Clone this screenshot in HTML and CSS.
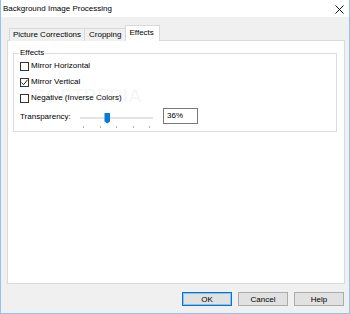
FILE: index.html
```html
<!DOCTYPE html>
<html lang="en">
<head>
  <meta charset="UTF-8" />
  <title>Background Image Processing</title>
  <link rel="stylesheet" href="styles.css">
</head>
<body>
  <div class="window">
    <!-- Title bar -->
    <div class="titlebar">
      <span class="title">Background Image Processing</span>
      <svg class="close" width="9" height="9" viewBox="0 0 9 9">
        <path d="M0.5 0.5 L8.5 8.5 M8.5 0.5 L0.5 8.5" stroke="#111" stroke-width="1" fill="none" />
      </svg>
    </div>

    <div class="client">
      <!-- Tabs -->
      <div class="tabs">
        <div class="tab">Picture Corrections</div>
        <div class="tab">Cropping</div>
        <div class="tab active">Effects</div>
      </div>

      <!-- Tab page -->
      <div class="panel">
        <fieldset class="group">
          <legend>Effects</legend>
          <div class="check-row"><span class="box"></span>Mirror Horizontal</div>
          <div class="check-row">
            <span class="box">
              <svg width="7" height="7" viewBox="0 0 7 7"><path d="M0.5 3.5 L2.5 5.8 L6.5 0.8" stroke="#222" stroke-width="1" fill="none" /></svg>
            </span>Mirror Vertical
          </div>
          <div class="check-row"><span class="box"></span>Negative (Inverse Colors)</div>
          <div class="slider-row">
            <span class="slider-label">Transparency:</span>
            <svg class="slider" width="76" height="20" viewBox="0 0 76 20">
              <rect x="0" y="8" width="73" height="2" fill="#e3e3e3" />
              <g fill="#b0b0b0">
                <rect x="3" y="17" width="1" height="2" />
                <rect x="20" y="17" width="1" height="2" />
                <rect x="36" y="17" width="1" height="2" />
                <rect x="53" y="17" width="1" height="2" />
                <rect x="69" y="17" width="1" height="2" />
              </g>
              <path d="M24.5 4 H30 V12.5 L27.25 14.5 L24.5 12.5 Z" fill="#0a78d6" />
            </svg>
            <div class="value-box">36%</div>
          </div>
        </fieldset>
        <div class="watermark">SOFTPEDIA<sup>®</sup></div>
      </div>

      <!-- Buttons -->
      <div class="buttons">
        <button class="btn default">OK</button>
        <button class="btn">Cancel</button>
        <button class="btn">Help</button>
      </div>
    </div>
  </div>
</body>
</html>
```

FILE: styles.css
```css
* { box-sizing: border-box; margin: 0; padding: 0; }
html, body { width: 350px; height: 314px; overflow: hidden; background: #fff; }
body { font-family: "Liberation Sans", Arial, sans-serif; font-size: 8px; color: #000; }

/* ===== Window frame ===== */
.window {
  width: 350px;
  height: 314px;
  display: flex;
  flex-direction: column;
  border: 1px solid #93c2ec;
  border-top: none;
}
.titlebar {
  height: 17px;
  flex-shrink: 0;
  display: flex;
  align-items: center;
  justify-content: space-between;
  padding: 0 5px 0 2px;
  background: #fff;
}
.title { font-size: 8px; line-height: 10px; }
.close { display: block; margin-top: 1px; }

/* ===== Client area ===== */
.client {
  flex: 1;
  display: flex;
  flex-direction: column;
  background: #f0f0f0;
  padding: 8px 4px 7px 6px;
}

/* ===== Tabs ===== */
.tabs { display: flex; align-items: flex-end; height: 16px; padding-left: 2px; position: relative; z-index: 1; }
.tab {
  height: 13px;
  line-height: 11px;
  padding: 0 3px 0 3px;
  border: 1px solid #d9d9d9;
  border-bottom: none;
  background: #f0f0f0;
  margin-right: -1px;
}
.tab:nth-child(2) { padding: 0 3px 0 4px; }
.tab.active {
  height: 16px;
  line-height: 14px;
  background: #fff;
  padding: 0 5px 0 4px;
}

/* ===== Panel ===== */
.panel {
  flex: 1;
  margin-top: -1px;
  background: #fff;
  border: 1px solid #d9d9d9;
  position: relative;
}
.group {
  margin: 7px 7px 0 5px;
  border: 1px solid #dcdcdc;
  padding: 0 6px 5px 6px;
}
.group legend { line-height: 10px; padding: 0 1px; margin-left: -1px; }

.check-row { height: 16px; display: flex; align-items: center; line-height: 10px; position: relative; z-index: 1; }
.box {
  width: 9px;
  height: 9px;
  border: 1px solid #333;
  background: #fff;
  margin-right: 2px;
  display: flex;
  align-items: center;
  justify-content: center;
}
.box svg { display: block; }

.slider-row { height: 20px; display: flex; align-items: center; }
.slider-label { width: 60px; }
.slider { display: block; margin-top: 6px; }
.value-box {
  width: 35px;
  height: 16px;
  margin-left: 7px;
  border: 1px solid #7a7a7a;
  background: #fff;
  line-height: 14px;
  padding-left: 3px;
}

/* faint watermark stamped over the page */
.watermark {
  position: absolute;
  left: 25px;
  top: 45px;
  font-size: 19px;
  line-height: 19px;
  font-weight: bold;
  color: rgba(0, 0, 0, 0.045);
  pointer-events: none;
}
.watermark sup { font-size: 6px; vertical-align: top; }

/* ===== Buttons ===== */
.buttons { display: flex; justify-content: flex-end; gap: 6px; margin-top: 8px; height: 14px; padding-right: 1px; }
.btn {
  width: 50px;
  height: 14px;
  font-family: "Liberation Sans", Arial, sans-serif;
  font-size: 8px;
  color: #000;
  background: #e1e1e1;
  border: 1px solid #adadad;
}
.btn.default { border-color: #0078d7; box-shadow: inset 0 0 0 1px #8fbfe8; }
```
